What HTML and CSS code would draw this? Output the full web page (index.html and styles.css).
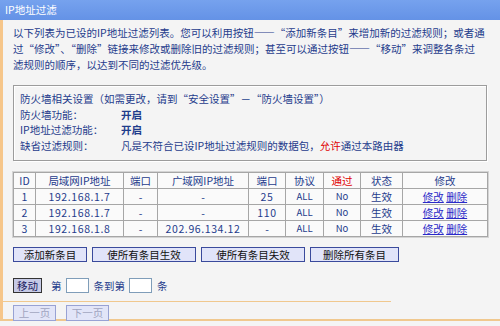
FILE: index.html
```html
<!DOCTYPE html>
<html lang="zh-CN">
<head>
    <meta charset="UTF-8">
    <title>IP地址过滤</title>
    <link rel="stylesheet" href="styles.css">
</head>
<body>
    <div class="title">IP地址过滤</div>
    <div class="main">
        <p class="intro">以下列表为已设的IP地址过滤列表。您可以利用按钮——“添加新条目”来增加新的过滤规则；或者通<br>过“修改”、“删除”链接来修改或删除旧的过滤规则；甚至可以通过按钮——“移动”来调整各条过<br>滤规则的顺序，以达到不同的过滤优先级。</p>

        <div class="settings">
            <div class="row">防火墙相关设置（如需更改，请到“安全设置”－“防火墙设置”）</div>
            <div class="row"><span class="key">防火墙功能：</span><b>开启</b></div>
            <div class="row"><span class="key">IP地址过滤功能：</span><b>开启</b></div>
            <div class="row"><span class="key">缺省过滤规则：</span>凡是不符合已设IP地址过滤规则的数据包，<span class="red">允许</span>通过本路由器</div>
        </div>

        <table class="rules">
            <tr>
                <th class="c-id">ID</th>
                <th class="c-lan">局域网IP地址</th>
                <th class="c-port">端口</th>
                <th class="c-wan">广域网IP地址</th>
                <th class="c-port2">端口</th>
                <th class="c-proto">协议</th>
                <th class="c-pass red">通过</th>
                <th class="c-state">状态</th>
                <th class="c-edit">修改</th>
            </tr>
            <tr>
                <td>1</td><td class="num">192.168.1.7</td><td>-</td><td>-</td><td class="num">25</td>
                <td class="lat">ALL</td><td class="lat">No</td><td>生效</td>
                <td><a href="#">修改</a> <a href="#">删除</a></td>
            </tr>
            <tr>
                <td>2</td><td class="num">192.168.1.7</td><td>-</td><td>-</td><td class="num">110</td>
                <td class="lat">ALL</td><td class="lat">No</td><td>生效</td>
                <td><a href="#">修改</a> <a href="#">删除</a></td>
            </tr>
            <tr>
                <td>3</td><td class="num">192.168.1.8</td><td>-</td><td class="num">202.96.134.12</td><td>-</td>
                <td class="lat">ALL</td><td class="lat">No</td><td>生效</td>
                <td><a href="#">修改</a> <a href="#">删除</a></td>
            </tr>
        </table>

        <div class="actions">
            <button type="button" class="btn w-add">添加新条目</button>
            <button type="button" class="btn w-all">使所有条目生效</button>
            <button type="button" class="btn w-all">使所有条目失效</button>
            <button type="button" class="btn w-del">删除所有条目</button>
        </div>

        <div class="move">
            <button type="button" class="btn-move">移动</button>
            <span>第</span>
            <input type="text" class="box">
            <span>条到第</span>
            <input type="text" class="box">
            <span>条</span>
        </div>

        <div class="sep"></div>

        <div class="pager">
            <button type="button" class="btn-page" disabled>上一页</button>
            <button type="button" class="btn-page" disabled>下一页</button>
        </div>
    </div>
    <div class="bottom-line"></div>
</body>
</html>
```

FILE: styles.css
```css
html, body {
    margin: 0;
    padding: 0;
}
body {
    width: 500px;
    height: 326px;
    overflow: hidden;
    background-color: #f4f4f4;
    font-family: "Noto Sans CJK SC", "DejaVu Sans", sans-serif;
    font-size: 10.5px;
    color: #1f3c8c;
}
.title {
    height: 20px;
    line-height: 20px;
    padding-left: 5px;
    color: #fff;
    background: linear-gradient(#76a2ee, #6492e6);
}
.main {
    border-left: 3px solid #f6c68a;
    padding: 5px 12px 0 10px;
    height: 299px;
    box-sizing: border-box;
}
.intro {
    margin: 0;
    line-height: 16px;
    white-space: nowrap;
}
.settings {
    margin-top: 12px;
    width: 474px;
    height: 76px;
    box-sizing: border-box;
    padding: 5px 6px;
    border: 1px solid #9c9c9c;
    box-shadow: inset 1px 1px 0 #fff, 1px 1px 0 #fff;
}
.row {
    line-height: 15.7px;
    white-space: nowrap;
}
.key {
    display: inline-block;
    width: 101px;
}
.red {
    color: #e00000;
}
.rules {
    margin-top: 11px;
    width: 475px;
    border-collapse: collapse;
    outline: 1px solid #d4d4d4;
    outline-offset: 0;
    background-color: #fafafa;
}
.rules th, .rules td {
    border: 1px solid #a6a6a6;
    height: 15px;
    padding: 0;
    line-height: 15px;
    text-align: center;
    font-weight: normal;
    white-space: nowrap;
}
.rules th.red {
    color: #e00000;
}
.c-id { width: 21px; }
.c-lan { width: 87px; }
.c-port { width: 33px; }
.c-wan { width: 90px; }
.c-port2 { width: 36px; }
.c-proto { width: 37px; }
.c-pass { width: 36px; }
.c-state { width: 41px; }
.num {
    letter-spacing: 0.6px;
}
.lat {
    font-weight: bold;
    font-size: 9.5px;
}
.rules a {
    color: #2a2ac8;
    text-decoration: underline;
}
.actions {
    margin-top: 10px;
    display: flex;
    gap: 5px;
}
.btn {
    height: 15px;
    padding: 0;
    border: 1px solid #3a4a9c;
    background-color: #e1e4f9;
    color: #111;
    font-family: inherit;
    font-size: 10.5px;
    line-height: 13px;
}
.w-add { width: 74px; }
.w-all { width: 104px; }
.w-del { width: 89px; }
.move {
    margin-top: 16px;
    display: flex;
    align-items: center;
    height: 15px;
}
.btn-move {
    width: 29px;
    height: 15px;
    padding: 0;
    border: 1px solid #333;
    background-color: #c6cae6;
    color: #1a1a60;
    font-family: inherit;
    font-size: 10.5px;
    line-height: 13px;
    margin-right: 9px;
}
.box {
    width: 23px;
    height: 15px;
    box-sizing: border-box;
    border: 1px solid #7f9db9;
    background: #fff;
    padding: 0;
    margin: 0 5px 0 4px;
}
.sep {
    margin-top: 8px;
    margin-left: -10px;
    width: 388px;
    height: 1px;
    background-color: #f0c88e;
}
.pager {
    margin-top: 3px;
    display: flex;
    gap: 10px;
}
.btn-page {
    width: 43px;
    height: 16px;
    padding: 0;
    border: 1px solid #98a2d4;
    background-color: #e2e5f8;
    color: #a0a4c0;
    font-family: inherit;
    font-size: 10.5px;
    line-height: 14px;
}
.bottom-line {
    height: 2px;
    background-color: #f0c88e;
    margin-top: 0;
}
```
